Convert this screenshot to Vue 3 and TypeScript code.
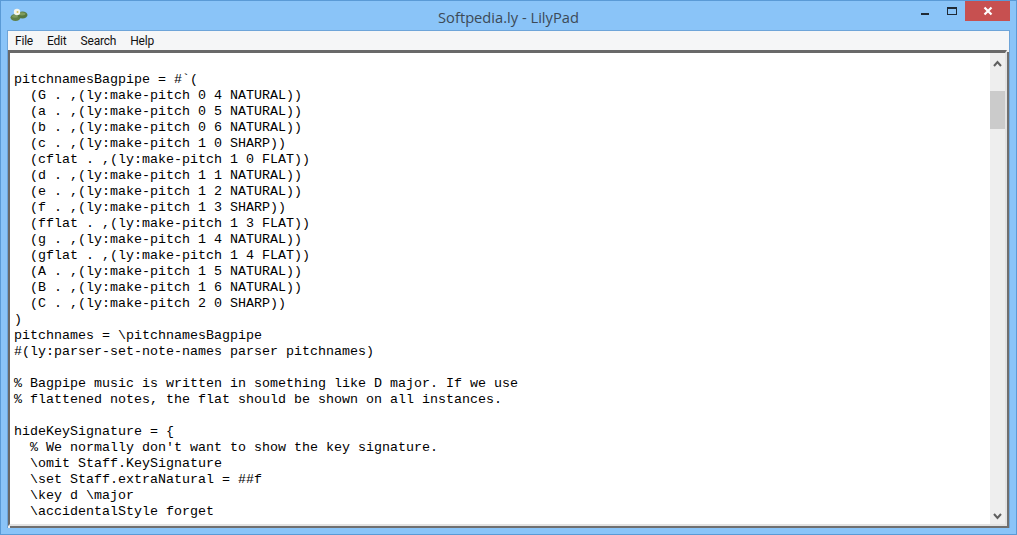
<script setup lang="ts">
const menus: string[] = ['File', 'Edit', 'Search', 'Help']
const lines: string[] = [
  '',
  'pitchnamesBagpipe = #`(',
  '  (G . ,(ly:make-pitch 0 4 NATURAL))',
  '  (a . ,(ly:make-pitch 0 5 NATURAL))',
  '  (b . ,(ly:make-pitch 0 6 NATURAL))',
  '  (c . ,(ly:make-pitch 1 0 SHARP))',
  '  (cflat . ,(ly:make-pitch 1 0 FLAT))',
  '  (d . ,(ly:make-pitch 1 1 NATURAL))',
  '  (e . ,(ly:make-pitch 1 2 NATURAL))',
  '  (f . ,(ly:make-pitch 1 3 SHARP))',
  '  (fflat . ,(ly:make-pitch 1 3 FLAT))',
  '  (g . ,(ly:make-pitch 1 4 NATURAL))',
  '  (gflat . ,(ly:make-pitch 1 4 FLAT))',
  '  (A . ,(ly:make-pitch 1 5 NATURAL))',
  '  (B . ,(ly:make-pitch 1 6 NATURAL))',
  '  (C . ,(ly:make-pitch 2 0 SHARP))',
  ')',
  'pitchnames = \\pitchnamesBagpipe',
  '#(ly:parser-set-note-names parser pitchnames)',
  '',
  '% Bagpipe music is written in something like D major. If we use',
  '% flattened notes, the flat should be shown on all instances.',
  '',
  'hideKeySignature = {',
  "  % We normally don't want to show the key signature.",
  '  \\omit Staff.KeySignature',
  '  \\set Staff.extraNatural = ##f',
  '  \\key d \\major',
  '  \\accidentalStyle forget',
]
</script>

<template>
  <div class="window">
    <header class="titlebar">
      <svg class="appicon" width="18" height="14" viewBox="0 0 18 14">
        <ellipse cx="5.5" cy="9.5" rx="5" ry="3.5" fill="#5f7f45" />
        <ellipse cx="12.5" cy="7" rx="5" ry="3.5" fill="#55773f" />
        <ellipse cx="12" cy="5.8" rx="3.5" ry="1.6" fill="#7f9c5c" />
        <ellipse cx="5" cy="8.4" rx="3" ry="1.4" fill="#7d9a5d" />
        <circle cx="7" cy="4" r="3.2" fill="#f6f6ee" />
        <circle cx="7.5" cy="4" r="1" fill="#d8c55a" />
      </svg>
      <span class="title">Softpedia.ly - LilyPad</span>
      <div class="controls">
        <div class="ctl"><span class="min"></span></div>
        <div class="ctl ctl-max"><span class="max"></span></div>
        <div class="close">
          <svg width="10" height="10" viewBox="0 0 10 10">
            <path d="M1.5 1.5 L8.5 8.5 M8.5 1.5 L1.5 8.5" stroke="#fff" stroke-width="2.2" fill="none" />
          </svg>
        </div>
      </div>
    </header>
    <div class="client">
      <nav class="menubar">
        <span v-for="m in menus" :key="m" class="menu">{{ m }}</span>
      </nav>
      <div class="sunken">
        <pre class="editor"><div v-for="(l, i) in lines" :key="i" class="line">{{ l || ' ' }}</div></pre>
        <aside class="scrollbar">
          <svg class="arrow" width="9" height="7" viewBox="0 0 9 7">
            <path d="M1 6 L4.5 2 L8 6" stroke="#5f5f5f" stroke-width="2" fill="none" />
          </svg>
          <div class="track"><div class="thumb"></div></div>
          <svg class="arrow" width="9" height="7" viewBox="0 0 9 7">
            <path d="M1 1 L4.5 5 L8 1" stroke="#5f5f5f" stroke-width="2" fill="none" />
          </svg>
        </aside>
      </div>
    </div>
  </div>
</template>

<style>
html, body { margin: 0; overflow: hidden; background: #8ac4f8; }
</style>

<style scoped>
.window {
  width: 1017px;
  height: 535px;
  box-sizing: border-box;
  border: 1px solid #5a9ad6;
  background: #8ac4f8;
  display: flex;
  flex-direction: column;
  overflow: hidden;
}
.titlebar {
  height: 29px;
  flex: none;
  display: flex;
  align-items: flex-start;
  position: relative;
  padding-left: 9px;
}
.appicon { margin-top: 7px; }
.title {
  position: absolute;
  left: 0;
  right: 0;
  top: 7px;
  text-align: center;
  font: 14.7px/18px "Open Sans", "Liberation Sans", sans-serif;
  color: #3c4a57;
}
.controls {
  margin-left: auto;
  margin-right: 6px;
  display: flex;
  position: relative;
}
.ctl {
  width: 27px;
  height: 20px;
  display: flex;
  align-items: flex-start;
  justify-content: center;
}
.ctl-max {
  justify-content: flex-end;
  padding-right: 8px;
  box-sizing: border-box;
}
.min { width: 8px; height: 2px; background: #1f2a35; margin-top: 12px; }
.max {
  width: 10px;
  height: 8px;
  box-sizing: border-box;
  border: 1px solid #1f2a35;
  border-top-width: 2px;
  margin-top: 6px;
}
.close {
  width: 45px;
  height: 20px;
  background: #c75050;
  display: flex;
  align-items: center;
  justify-content: center;
}
.client {
  margin: 0 6px 6px 6px;
  flex: 1;
  min-height: 0;
  border: 1px solid #6ea5d9;
  border-bottom: 0;
  display: flex;
  flex-direction: column;
  background: #f0f0f0;
}
.menubar {
  height: 19px;
  flex: none;
  box-sizing: border-box;
  padding-top: 1px;
  background: #f5f6f7;
  display: flex;
  align-items: center;
  font: 12px/18px Roboto, "Liberation Sans", Arial, sans-serif;
  letter-spacing: -0.2px;
  color: #111;
}
.menu { padding: 0 7px; }
.sunken {
  flex: 1;
  min-height: 0;
  display: flex;
  border-style: solid;
  border-width: 3px 2px 2px 2px;
  border-color: #696969 #e3e3e3 #e3e3e3 #696969;
  box-shadow: 2px 2px 0 #6f6f6f;
  margin: 0 2px 2px 0;
  background: #fff;
  overflow: hidden;
}
.editor {
  flex: 1;
  margin: 0;
  padding: 3px 0 0 4px;
  font: 13.33px/16px "Liberation Mono", "Courier New", monospace;
  color: #000;
  overflow: hidden;
}
.line { height: 16px; white-space: pre; }
.scrollbar {
  width: 15px;
  flex: none;
  background: #eeeeee;
  display: flex;
  flex-direction: column;
  align-items: center;
  padding: 7px 0 4px;
  box-sizing: border-box;
}
.arrow { flex: none; }
.track { flex: 1; width: 100%; }
.thumb { height: 38px; margin-top: 24px; background: #cbcbcb; }
</style>
